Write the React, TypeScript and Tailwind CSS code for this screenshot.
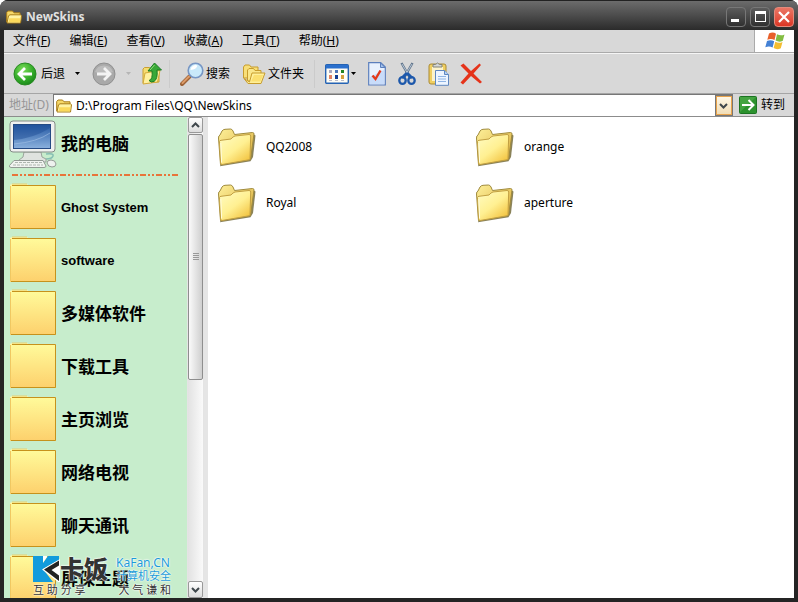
import type { ReactNode } from "react";

type IconProps = { className?: string };

const MENUS = [
  { label: "文件", key: "F" },
  { label: "编辑", key: "E" },
  { label: "查看", key: "V" },
  { label: "收藏", key: "A" },
  { label: "工具", key: "T" },
  { label: "帮助", key: "H" },
];

const SHORTCUTS = [
  { label: "Ghost System", latin: true },
  { label: "software", latin: true },
  { label: "多媒体软件", latin: false },
  { label: "下载工具", latin: false },
  { label: "主页浏览", latin: false },
  { label: "网络电视", latin: false },
  { label: "聊天通讯", latin: false },
  { label: "屏保主题", latin: false },
];

const FOLDERS = ["QQ2008", "orange", "Royal", "aperture"];

function SmallFolderIcon({ className }: IconProps) {
  return (
    <svg className={className} width="16" height="14" viewBox="0 0 16 14">
      <path d="M.7 12V2.500L2 1h4.500L8 2.800h6V6" fill="#f6d868" stroke="#a87c18" />
      <path d="M1 12.800L2.500 5.800 4 4.800h10.500l1 1L14.500 13H1z" fill="#fff3a4" stroke="#a87c18" />
      <path d="M2.500 12.300h11.500l.7-4H3.300z" fill="#fbd95c" />
    </svg>
  );
}

function BigFolderIcon() {
  return (
    <svg className="shrink-0" width="40" height="40" viewBox="0 0 40 40">
      <defs>
        <linearGradient id="bigFront" x1="0" y1="0" x2="0.8" y2="1">
          <stop offset="0" stopColor="#fffcc4" />
          <stop offset="0.55" stopColor="#fff092" />
          <stop offset="1" stopColor="#f2c23e" />
        </linearGradient>
        <linearGradient id="bigBack" x1="0" y1="0" x2="1" y2="1">
          <stop offset="0" stopColor="#fdf09a" />
          <stop offset="1" stopColor="#d8a834" />
        </linearGradient>
      </defs>
      <path d="M4 39.300L34.500 34.300 37 30 39.500 8.500 37 7 5 36z" fill="#6d6330" opacity="0.8" />
      <path
        d="M2.500 11Q2.500 8.500 4 8L6 4Q7 2.500 9 2.300L14.500 2Q16 2 17 4L18.500 7.500 36.500 5.500Q38 5.500 38 7L34.500 32.500 4.500 37.500z"
        fill="url(#bigBack)"
        stroke="#a08b3e"
      />
      <path
        d="M3.500 14.500Q3.700 13.500 5 13.300L15 12Q17 9.500 19 9L33 7.500Q34.800 7.500 34.700 9L34 31.500Q34 32.500 33 32.800L6 37.500Q4.700 37.500 4.600 36z"
        fill="url(#bigFront)"
        stroke="#c2a042"
      />
      <path d="M4.800 16L5.600 35.500" stroke="#fffde0" fill="none" />
    </svg>
  );
}

function ShortcutFolderIcon() {
  return (
    <svg className="shrink-0" width="46" height="49" viewBox="0 0 46 49">
      <defs>
        <linearGradient id="shortcutFill" x1="0" y1="0" x2="0" y2="1">
          <stop offset="0" stopColor="#fffa9a" />
          <stop offset="1" stopColor="#fdd06c" />
        </linearGradient>
      </defs>
      <path d="M0 3V2L2 1H17L19 2.500V4H0z" fill="#fff7a4" />
      <path d="M2 1H17" stroke="#e4cf70" />
      <rect x="0" y="3" width="46" height="43" fill="url(#shortcutFill)" />
      <path d="M2 2.500H45.500V45.500H1" fill="none" stroke="#c6921c" />
      <path d="M.5 3V45" stroke="#f0c862" />
    </svg>
  );
}

function ComputerIcon() {
  return (
    <svg className="shrink-0" width="48" height="48" viewBox="0 0 48 48">
      <defs>
        <linearGradient id="screen" x1="0" y1="0" x2="0" y2="1">
          <stop offset="0" stopColor="#2559a4" />
          <stop offset="1" stopColor="#8bb1dd" />
        </linearGradient>
      </defs>
      <path d="M37 34q8-1 7 2t-7 3" fill="none" stroke="#86bfb3" strokeWidth="1.500" />
      <path d="M15 32h17l1 5 4 2v3H10v-2l4-3z" fill="#dfe3df" stroke="#9ba59c" />
      <rect x="1" y="1" width="45" height="31" rx="3" fill="#f0f1f0" stroke="#838b86" />
      <rect x="4.500" y="4.500" width="37" height="24" fill="url(#screen)" stroke="#244a84" />
      <path d="M5 20Q25 18 41 8V5H5z" fill="#1c4c95" opacity="0.45" />
      <path d="M5 24Q28 22 41 13" stroke="#a4c2e6" fill="none" opacity="0.6" />
      <path d="M5 40.500h29l3 5.500q0 1.500-2 1.500H2q-2 0-1.500-2z" fill="#f1f3f0" stroke="#939b95" />
      <path d="M6 42.500h27M4 45h30" stroke="#aeb6af" strokeDasharray="3 1" />
      <path d="M38 43q0-3 4-3 4.500 0 5 4 0 3-4 3t-5-4z" fill="#eef1ee" stroke="#939b95" />
    </svg>
  );
}

function BackIcon() {
  return (
    <svg width="24" height="24" viewBox="0 0 24 24">
      <defs>
        <radialGradient id="backFill" cx="0.4" cy="0.3" r="0.75">
          <stop offset="0" stopColor="#7bdc58" />
          <stop offset="0.6" stopColor="#35ad2a" />
          <stop offset="1" stopColor="#178418" />
        </radialGradient>
      </defs>
      <circle cx="12" cy="12" r="11" fill="url(#backFill)" stroke="#298a22" />
      <path d="M19 12H7M12 6L6 12l6 6" fill="none" stroke="#fff" strokeWidth="2.800" />
    </svg>
  );
}

function ForwardIcon() {
  return (
    <svg width="24" height="24" viewBox="0 0 24 24">
      <circle cx="12" cy="12" r="11" fill="#a9a9a9" stroke="#8f8f8f" />
      <path d="M3 10a9.500 9.500 0 0 1 18 0q-9 4-18 0z" fill="#bcbcbc" />
      <path d="M5 12h12M12 6l6 6-6 6" fill="none" stroke="#f3f3f3" strokeWidth="2.800" />
    </svg>
  );
}

function UpIcon() {
  return (
    <svg width="22" height="24" viewBox="0 0 22 24">
      <path d="M2 21V7l1.500-1.500h5L10 7h8v13z" fill="#f5dc70" stroke="#c9a032" />
      <path d="M2 22L4 11l15-2.500-2.500 11.500z" fill="#fff1a0" stroke="#d3aa3a" />
      <path d="M8 18.500q4-1 3-9.500H7L13.500 1l7 7H16q1 9-3 11.500-3 1.500-5-1z" fill="#38a838" stroke="#187b22" />
      <path d="M9 8l4.500-5" stroke="#94df7c" fill="none" />
    </svg>
  );
}

function SearchIcon() {
  return (
    <svg width="24" height="24" viewBox="0 0 24 24">
      <path d="M2 22L9.500 14.500" stroke="#9c6237" strokeWidth="4" strokeLinecap="round" />
      <path d="M2.500 21L9 14.500" stroke="#dc9b68" strokeWidth="2" strokeLinecap="round" />
      <circle cx="15.500" cy="8.500" r="7.300" fill="#c9e9fa" stroke="#7796c4" strokeWidth="1.600" />
      <path d="M10.500 8a5 5 0 0 1 7-4.500q-1 4-7 4.500z" fill="#fff" />
    </svg>
  );
}

function FoldersIcon() {
  return (
    <svg width="24" height="22" viewBox="0 0 24 22">
      <path d="M1.500 15V4L3 2h4.500L9 4h7v11z" fill="#f8df78" stroke="#c79c2d" />
      <path d="M5.500 18V7L7 5.500h4.500L13 7.500h6V18z" fill="#fae78b" stroke="#c79c2d" />
      <path d="M2 15.500L6 20.500h13L23 10H10L7.500 19z" fill="#fff09a" stroke="#c79c2d" />
      <path d="M9 18.500h9.500L21 12h-9z" fill="#fbe070" />
    </svg>
  );
}

function ViewsIcon() {
  return (
    <svg width="24" height="20" viewBox="0 0 24 20">
      <rect x=".7" y=".7" width="22.600" height="18.600" rx="1" fill="#fffdf4" stroke="#2463b4" strokeWidth="1.400" />
      <rect x="1" y="1" width="22" height="3.500" fill="#2b70cd" />
      <g>
        <rect x="4" y="6" width="3" height="3" fill="#a8a9bf" />
        <rect x="10" y="6" width="3" height="3" fill="#4e78ba" />
        <rect x="16" y="6" width="3" height="3" fill="#218422" />
        <rect x="4" y="11" width="3" height="4" fill="#e28262" />
        <rect x="10" y="11" width="3" height="4" fill="#123d91" />
        <rect x="16" y="11" width="3" height="4" fill="#d5a03b" />
        <path d="M4 16.500h3M10 16.500h3M16 16.500h3" stroke="#b9bcc9" />
      </g>
    </svg>
  );
}

function CheckDocIcon() {
  return (
    <svg width="18" height="24" viewBox="0 0 18 24">
      <path d="M.7.700h12L17.300 5v18H.7z" fill="#e8f1fe" stroke="#5b7fbd" strokeWidth="1.200" />
      <path d="M2 22V15L16 8v14z" fill="#c8dcfa" />
      <path d="M12.500 1v4.500H17z" fill="#a4c3ee" stroke="#5b7fbd" />
      <path d="M4.500 13.500l3 3.500 5-8.500" fill="none" stroke="#e33a1c" strokeWidth="2.400" />
    </svg>
  );
}

function ScissorsIcon() {
  return (
    <svg width="18" height="24" viewBox="0 0 18 24">
      <path d="M3.500 1L12 16M14.500 1L6 16" stroke="#61758c" strokeWidth="2.400" />
      <path d="M4 2l6 10M14 2L8 12" stroke="#c9d7e5" strokeWidth=".8" />
      <path d="M9 11L4 16M9 11l5 5" stroke="#1d58ab" strokeWidth="3" />
      <ellipse cx="4.500" cy="18.500" rx="3.200" ry="3.400" fill="none" stroke="#1d58ab" strokeWidth="2.300" />
      <ellipse cx="13.500" cy="18.500" rx="3.200" ry="3.400" fill="none" stroke="#1d58ab" strokeWidth="2.300" />
    </svg>
  );
}

function PasteIcon() {
  return (
    <svg width="22" height="24" viewBox="0 0 22 24">
      <rect x="1" y="2" width="17" height="20" rx="2" fill="#f0cf61" stroke="#a98a35" />
      <path d="M4 5h11v14H4z" fill="#fcf3cb" />
      <path d="M5 5V2.500h2.500Q9.500-.5 11.500 2.500H14V5z" fill="#d4d7d8" stroke="#838377" />
      <path d="M7.500 8.500h9l4 4v10.800h-13z" fill="#edf5ff" stroke="#5f87bf" />
      <path d="M16.500 8.500v4h4" fill="#b4d0f3" stroke="#5f87bf" />
      <path d="M10 14.500h8M10 17h8M10 19.500h8" stroke="#8fb4e4" />
    </svg>
  );
}

function DeleteIcon() {
  return (
    <svg width="22" height="22" viewBox="0 0 22 22">
      <path d="M.5 2.500L3.500.5 11 8 19.500.5l1.500 1.500L13.500 10.500 22 19l-2 1.500L11 13 3 21.500.5 19.500 8.500 10.500z" fill="#e5331a" />
    </svg>
  );
}

function GoIcon() {
  return (
    <svg width="18" height="18" viewBox="0 0 18 18">
      <rect x=".5" y=".5" width="17" height="17" rx="1" fill="#2c922e" stroke="#1c7422" />
      <path d="M1 1h16L1 16z" fill="#55b14f" opacity="0.6" />
      <path d="M3 9h11M9.500 4l5 5-5 5" fill="none" stroke="#fff" strokeWidth="2" />
    </svg>
  );
}

function WindowsLogo() {
  return (
    <svg width="20" height="18" viewBox="0 0 20 18">
      <path d="M4 1.500q4-2 7 .2L9.500 8Q6 6 2.300 7.800z" fill="#e8602b" />
      <path d="M12 2.200q4 2 7.500.2L17.800 8.800q-3.500 1.800-7.200-.2z" fill="#83bd43" />
      <path d="M2 9q3.700-1.800 7.200.2L7.600 15.600Q4.500 13.500.3 15.200z" fill="#4381d5" />
      <path d="M10.300 9.800q3.700 2 7.200.2l-1.700 6.300q-3.800 1.800-7.200-.2z" fill="#f3bd31" />
    </svg>
  );
}

function Caret({ faded = false }: { faded?: boolean }) {
  return (
    <svg width="5" height="3" viewBox="0 0 5 3">
      <path d="M0 0h5L2.500 3z" fill={faded ? "#b5b5b5" : "#000"} />
    </svg>
  );
}

function Chevron({ up = false }: { up?: boolean }) {
  return (
    <svg width="9" height="6" viewBox="0 0 9 6">
      <path d={up ? "M1 5l3.500-3.500L8 5" : "M1 1l3.500 3.500L8 1"} fill="none" stroke="#3f474c" strokeWidth="2" />
    </svg>
  );
}

function ToolButton({ label, className = "", children }: { label: string; className?: string; children: ReactNode }) {
  return (
    <button type="button" aria-label={label} className={`flex shrink-0 items-center ${className}`}>
      {children}
    </button>
  );
}

function TitleBar() {
  return (
    <header className="flex h-[30px] shrink-0 items-center justify-between border-t border-[#222] bg-linear-to-b from-[#6c6c6c] via-[#4c4c4c] via-50% to-[#2b2b2b] pt-0.5 pr-1 pl-1.5">
      <div className="flex items-center gap-1">
        <SmallFolderIcon />
        <h1 className="text-xs font-bold text-[#e0e0e0]">NewSkins</h1>
      </div>
      <div className="flex gap-1">
        <button type="button" aria-label="最小化" className="flex h-5 w-5 items-end rounded-sm border border-[#777] bg-linear-to-b from-[#5c5c5c] to-[#303030] pb-1 pl-1">
          <span className="h-[3px] w-2 bg-white" />
        </button>
        <button type="button" aria-label="最大化" className="flex h-5 w-5 items-center justify-center rounded-sm border border-[#777] bg-linear-to-b from-[#5c5c5c] to-[#303030]">
          <span className="h-[11px] w-[11px] border border-t-[3px] border-white" />
        </button>
        <button type="button" aria-label="关闭" className="flex h-5 w-5 items-center justify-center rounded-sm border border-[#e58a7c] bg-linear-to-b from-[#ea7564] to-[#dd3423]">
          <svg width="12" height="12" viewBox="0 0 12 12">
            <path d="M1 1l10 10M11 1L1 11" stroke="#fff" strokeWidth="2.200" />
          </svg>
        </button>
      </div>
    </header>
  );
}

function MenuBar() {
  return (
    <nav className="flex h-6 shrink-0 border-b border-[#f5f5f5]">
      <div className="flex flex-1 items-center gap-[19px] border-b border-[#aaa] pl-[9px]">
        {MENUS.map((menu) => (
          <button key={menu.key} type="button" className="text-xs whitespace-nowrap">
            {menu.label}(<span className="underline">{menu.key}</span>)
          </button>
        ))}
      </div>
      <div className="flex w-10 items-center justify-center border-b border-l border-[#aaa] bg-white">
        <WindowsLogo />
      </div>
    </nav>
  );
}

function Toolbar() {
  return (
    <div className="flex h-10 shrink-0 items-center border-b border-[#a5a5a5] pl-[9px] text-xs whitespace-nowrap">
      <ToolButton label="后退" className="gap-1">
        <BackIcon />
        后退
      </ToolButton>
      <ToolButton label="后退历史" className="ml-2.5">
        <Caret />
      </ToolButton>
      <ToolButton label="前进" className="ml-3">
        <ForwardIcon />
      </ToolButton>
      <ToolButton label="前进历史" className="ml-2.5">
        <Caret faded />
      </ToolButton>
      <ToolButton label="向上" className="ml-2.5">
        <UpIcon />
      </ToolButton>
      <span className="mx-1.5 h-7 w-px bg-[#cbcbcb]" />
      <ToolButton label="搜索" className="ml-1 gap-0.5">
        <SearchIcon />
        搜索
      </ToolButton>
      <ToolButton label="文件夹" className="ml-3 gap-0.5">
        <FoldersIcon />
        文件夹
      </ToolButton>
      <span className="mx-2.5 h-7 w-px bg-[#cbcbcb]" />
      <ToolButton label="查看方式" className="gap-0.5">
        <ViewsIcon />
        <Caret />
      </ToolButton>
      <ToolButton label="属性" className="ml-3">
        <CheckDocIcon />
      </ToolButton>
      <ToolButton label="剪切" className="ml-3">
        <ScissorsIcon />
      </ToolButton>
      <ToolButton label="粘贴" className="ml-3">
        <PasteIcon />
      </ToolButton>
      <ToolButton label="删除" className="ml-2.5">
        <DeleteIcon />
      </ToolButton>
    </div>
  );
}

function AddressBar() {
  return (
    <div className="flex h-[23px] shrink-0 border-b border-[#8c8c8c] pl-[5px] text-xs">
      <label htmlFor="address" className="flex w-11 shrink-0 items-center whitespace-nowrap text-[#969696]">
        地址(D)
      </label>
      <div className="flex flex-1 items-center border-t border-l border-[#777] bg-white pl-0.5">
        <SmallFolderIcon className="shrink-0" />
        <input id="address" className="min-w-0 flex-1 pl-1 outline-none" defaultValue="D:\Program Files\QQ\NewSkins" />
        <button
          type="button"
          aria-label="地址列表"
          className="flex h-full w-[18px] items-center justify-center border border-[#777] bg-linear-to-b from-[#fff8e8] to-[#f0dcb4] ring-1 ring-[#e8a34c] ring-inset"
        >
          <Chevron />
        </button>
      </div>
      <button type="button" className="mr-[9px] ml-1.5 flex items-center gap-1 whitespace-nowrap">
        <GoIcon />
        转到
      </button>
    </div>
  );
}

function ScrollBar() {
  return (
    <div className="flex w-[17px] shrink-0 flex-col border-x border-[#e4e4e4] bg-linear-to-r from-[#e2e2e2] to-[#fafafa]">
      <button type="button" aria-label="向上滚动" className="flex h-4 items-center justify-center rounded-xs border border-[#999] bg-linear-to-b from-white to-[#ddd]">
        <Chevron up />
      </button>
      <div className="flex-1 pt-px">
        <div className="flex h-[55%] flex-col items-center justify-center gap-px rounded-xs border border-[#8e8e8e] bg-linear-to-r from-[#fafafa] to-[#cfcfcf]">
          <span className="h-px w-1.5 bg-[#999]" />
          <span className="h-px w-1.5 bg-[#999]" />
          <span className="h-px w-1.5 bg-[#999]" />
          <span className="h-px w-1.5 bg-[#999]" />
        </div>
      </div>
      <button type="button" aria-label="向下滚动" className="flex h-[17px] items-center justify-center rounded-xs border border-[#999] bg-linear-to-b from-white to-[#ddd]">
        <Chevron />
      </button>
    </div>
  );
}

function Sidebar() {
  return (
    <aside className="flex w-[204px] shrink-0 border-r-4 border-[#e5e5e5]">
      <div className="flex-1 overflow-hidden bg-[#c7edcc]">
        <a href="#computer" className="flex h-[53px] items-center gap-1 pl-[5px] text-[17px] font-bold">
          <ComputerIcon />
          我的电脑
        </a>
        <svg className="block h-[11px] w-full" aria-hidden="true">
          <line x1="8" y1="5" x2="174" y2="5" stroke="#e8743a" strokeWidth="2" strokeDasharray="6 2 2 2 2 2" />
        </svg>
        <ul>
          {SHORTCUTS.map((item) => (
            <li key={item.label}>
              <a
                href="#shortcut"
                className={`flex h-[53px] items-center gap-[5px] pl-1.5 font-bold ${
                  item.latin ? "font-['Liberation_Sans',sans-serif] text-[13px]" : "text-[17px]"
                }`}
              >
                <ShortcutFolderIcon />
                {item.label}
              </a>
            </li>
          ))}
        </ul>
      </div>
      <ScrollBar />
    </aside>
  );
}

function Watermark() {
  return (
    <div className="pointer-events-none absolute bottom-1 left-[33px] text-[#333] [text-shadow:0_0_2px_#fff,0_0_2px_#fff,0_0_1px_#fff]">
      <div className="flex items-center gap-2">
        <div className="flex items-center">
          <svg width="27" height="26" viewBox="0 0 27 26">
            <path d="M0 0H10V7L15 0H26V4L10 13 20 26H0z" fill="#129bdc" />
            <path d="M10 0h4.500L10 6.500z" fill="#fff" />
            <path d="M27 3L9 13.500 25 26h2V3z" fill="#fff" />
            <path d="M26 4.500L11 13.500 26 25v-5.500L18.500 14 26 9.500z" fill="#222" />
          </svg>
          <span className="text-2xl leading-[26px] font-black">卡饭</span>
        </div>
        <div className="text-[#1c9bd8]">
          <p className="text-xs leading-[13px]">KaFan,CN</p>
          <p className="text-[11px] leading-[13px]">计算机安全</p>
        </div>
      </div>
      <div className="flex justify-between text-[11px] leading-4 whitespace-nowrap">
        <span>互 助 分 享</span>
        <span>大 气 谦 和</span>
      </div>
    </div>
  );
}

export default function App() {
  return (
    <div className="relative flex h-screen flex-col overflow-hidden rounded-t-lg bg-[#242424] font-['Noto_Sans','Noto_Sans_CJK_SC',sans-serif] text-black">
      <TitleBar />
      <div className="flex min-h-0 flex-1 flex-col border-x-4 border-b-4 border-[#242424] bg-[#d8d8d8]">
        <MenuBar />
        <Toolbar />
        <AddressBar />
        <div className="flex min-h-0 flex-1">
          <Sidebar />
          <main className="min-w-0 flex-1 bg-white pt-0.5 pl-2">
            <ul className="grid grid-cols-[repeat(auto-fill,258px)]">
              {FOLDERS.map((name) => (
                <li key={name} className="flex h-14 items-center gap-2.5 text-xs">
                  <BigFolderIcon />
                  {name}
                </li>
              ))}
            </ul>
          </main>
        </div>
      </div>
      <Watermark />
    </div>
  );
}
